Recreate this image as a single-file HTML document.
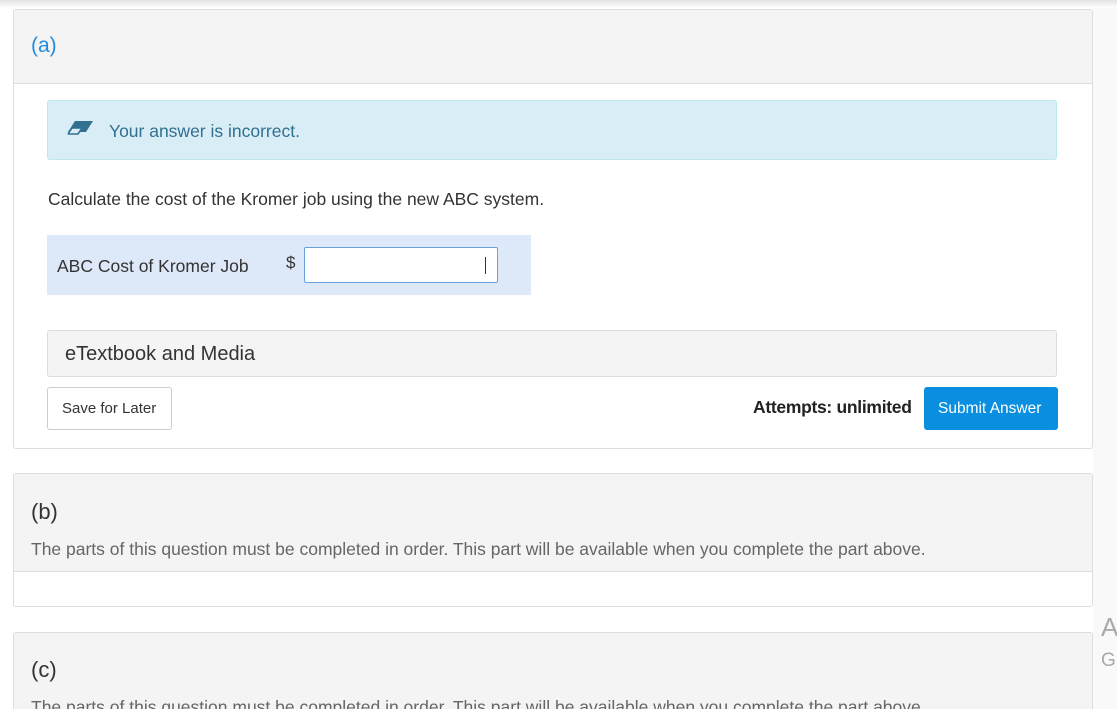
<!DOCTYPE html>
<html style="overflow:hidden;height:709px"><head><style>
body{margin:0;width:1117px;height:709px;overflow:hidden;background:#fff;font-family:"Liberation Sans",sans-serif;position:relative;color:#333}
.topsh{position:absolute;left:0;top:0;width:1117px;height:8px;background:linear-gradient(#e2e2e2,#fff)}
.side{position:absolute;left:1093px;top:8px;width:24px;height:701px;background:#f9f9f9}
.panel{position:absolute;left:13px;width:1078px;border:1px solid #ddd;border-radius:3px;background:#fff;overflow:hidden}
.hdr{background:#f4f4f4;border-bottom:1px solid #ddd;position:relative}
.abs{position:absolute;white-space:nowrap}
</style></head><body>
<div class="topsh"></div>
<div class="side"></div>
<div class="abs" style="left:1101px;top:612px;font-size:26px;color:#aaa">A</div>
<div class="abs" style="left:1101px;top:650px;font-size:19px;color:#aaa">G</div>

<div class="panel" style="top:9px;height:438px">
  <div class="hdr" style="height:73px"><div class="abs" style="left:17px;top:24px;font-size:21px;color:#1f8ce0">(a)</div></div>
  <div class="abs" style="left:33px;top:90px;width:1008px;height:58px;background:#d9edf7;border:1px solid #bce8f1;border-radius:3px">
    <svg class="abs" style="left:18px;top:19px" width="28" height="16" viewBox="0 0 28 16"><path d="M9 1H27L20 12H2Z" fill="#31708f"/><path d="M2.5 13L6 8H16L12 14H2.5Z" fill="#d9edf7" stroke="#31708f" stroke-width="1.6"/></svg>
    <div class="abs" style="left:61px;top:20px;font-size:17.5px;color:#31708f">Your answer is incorrect.</div>
  </div>
  <div class="abs" style="left:34px;top:179px;font-size:17.5px;color:#333">Calculate the cost of the Kromer job using the new ABC system.</div>
  <div class="abs" style="left:33px;top:225px;width:484px;height:60px;background:#dde8f8">
    <div class="abs" style="left:10px;top:21px;font-size:17.5px">ABC Cost of Kromer Job</div>
    <div class="abs" style="left:239px;top:18px;font-size:17px">$</div>
    <div class="abs" style="left:257px;top:12px;width:192px;height:34px;background:#fff;border:1px solid #6aa0dc;border-radius:2px"><div class="abs" style="left:180px;top:9px;width:1px;height:17px;background:#333"></div></div>
  </div>
  <div class="abs" style="left:33px;top:320px;width:1008px;height:45px;background:#f4f4f4;border:1px solid #ddd;border-radius:3px">
    <div class="abs" style="left:17px;top:12px;font-size:20px">eTextbook and Media</div>
  </div>
  <div class="abs" style="left:33px;top:377px;width:123px;height:41px;border:1px solid #ccc;border-radius:3px;background:#fff">
    <div class="abs" style="left:14px;top:12px;font-size:15px">Save for Later</div>
  </div>
  <div class="abs" style="left:739px;top:387px;font-size:17.5px;font-weight:bold;color:#222;letter-spacing:-0.3px">Attempts: unlimited</div>
  <div class="abs" style="left:910px;top:377px;width:134px;height:43px;border-radius:3px;background:#0a8ee0">
    <div class="abs" style="left:14px;top:13px;font-size:15.5px;color:#fff">Submit Answer</div>
  </div>
</div>

<div class="panel" style="top:473px;height:132px">
  <div class="hdr" style="height:97px">
    <div class="abs" style="left:17px;top:25px;font-size:22px;color:#333">(b)</div>
    <div class="abs" style="left:17px;top:65px;font-size:17.5px;color:#666">The parts of this question must be completed in order. This part will be available when you complete the part above.</div>
  </div>
</div>

<div class="panel" style="top:632px;height:100px">
  <div class="hdr" style="height:100px">
    <div class="abs" style="left:17px;top:24px;font-size:22px;color:#333">(c)</div>
    <div class="abs" style="left:17px;top:64px;font-size:17.5px;color:#666">The parts of this question must be completed in order. This part will be available when you complete the part above.</div>
  </div>
</div>
</body></html>
